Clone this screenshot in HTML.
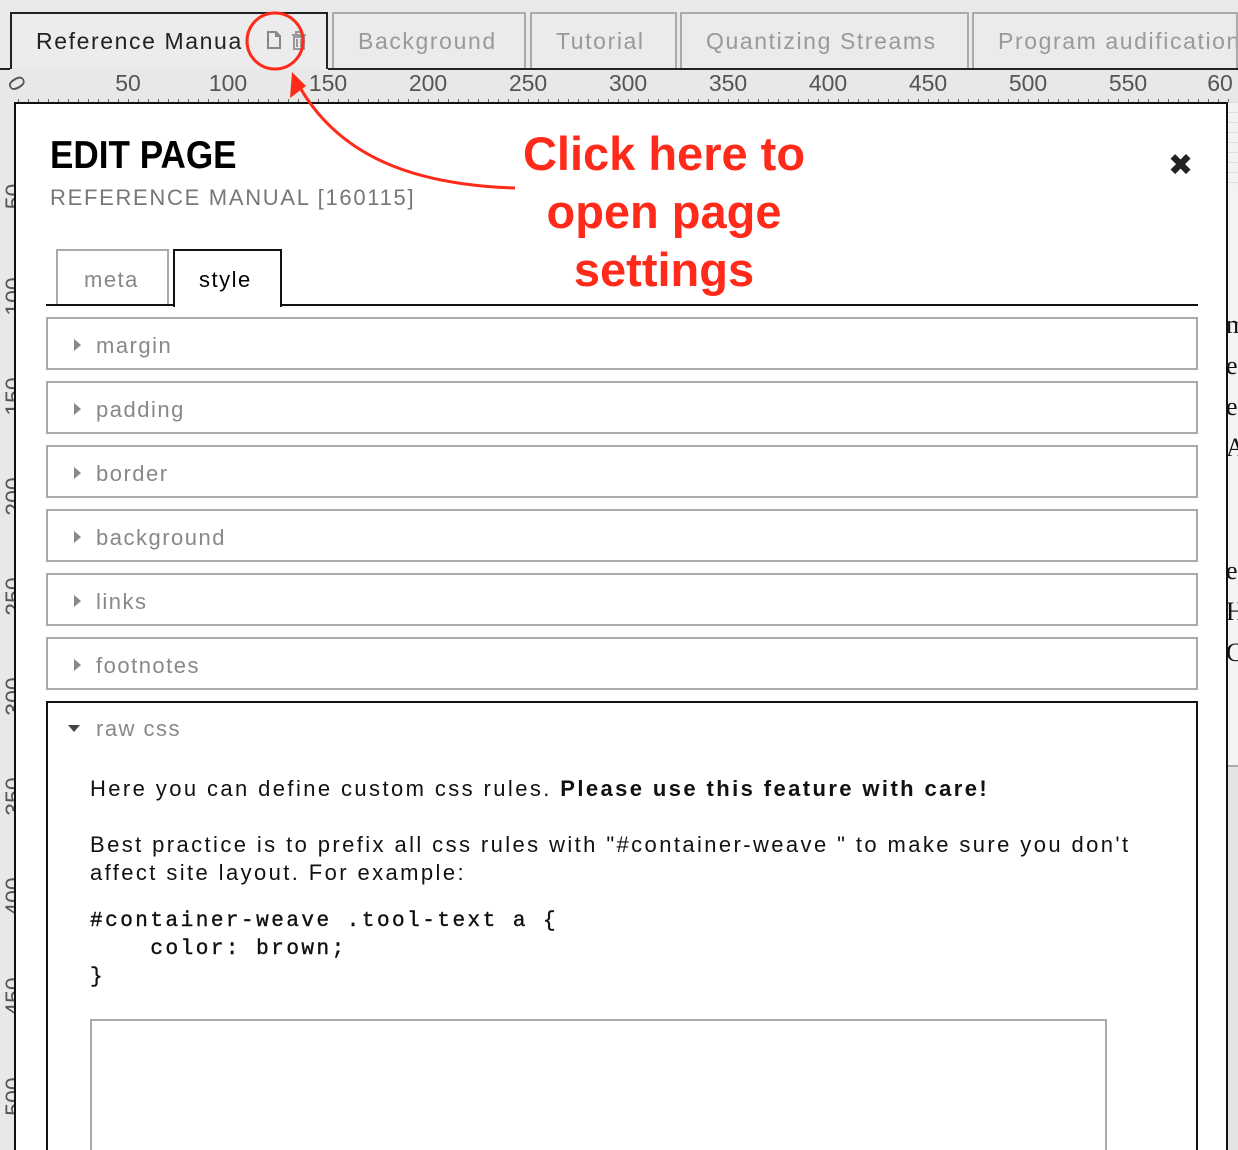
<!DOCTYPE html>
<html><head><meta charset="utf-8"><style>
*{margin:0;padding:0;box-sizing:border-box}
html,body{width:1238px;height:1150px;overflow:hidden}
body{background:#e9e9e9;font-family:"Liberation Sans","DejaVu Sans",sans-serif;position:relative}
.tab{position:absolute;top:12px;height:57px;border:2px solid #aaa;border-bottom:none;color:#999;font-size:23px;letter-spacing:1.6px;padding:14px 0 0 24px;background:#ebebeb;white-space:nowrap;overflow:hidden}
.abs{position:absolute}
.acc{position:absolute;left:46px;width:1152px;height:53px;border:2px solid #aaa;color:#888;font-size:22px;letter-spacing:1.5px;padding:14px 0 0 48px;background:#fff}
.acc:before{content:"";position:absolute;left:26px;top:20px;border-left:7px solid #888;border-top:6px solid transparent;border-bottom:6px solid transparent}
.rn{position:absolute;top:70px;font-size:23px;color:#555;font-family:"Liberation Sans Narrow","Liberation Sans",sans-serif;transform:translateX(-50%)}
.vn{position:absolute;left:-6px;font-size:23px;color:#555;transform:rotate(-90deg);transform-origin:center;width:40px;text-align:center}
.red{position:absolute;color:#ff2a1a;font-weight:bold;font-size:47px;text-align:center;width:400px;left:464px}
</style></head><body>
<div class="tab" style="left:10px;width:318px;border-color:#222;color:#222;background:#ececec">Reference Manua</div>
<div class="tab" style="left:332px;width:194px">Background</div>
<div class="tab" style="left:530px;width:147px">Tutorial</div>
<div class="tab" style="left:680px;width:289px">Quantizing Streams</div>
<div class="tab" style="left:972px;width:266px">Program audification</div>
<div class="abs" style="left:0;top:68px;width:10px;height:2px;background:#222"></div>
<div class="abs" style="left:328px;top:68px;width:910px;height:2px;background:#222"></div>
<svg class="abs" style="left:262px;top:28px" width="50" height="26"><path d="M6 4h8l4 4v12H6z M14 4v4h4" fill="none" stroke="#888" stroke-width="2"/><path d="M30 7h14 M34 7V4h6v3 M32 9h10v12H32z M35 11v8 M39 11v8" fill="none" stroke="#999" stroke-width="2"/></svg>
<div class="abs" style="left:0;top:70px;width:1238px;height:32px;background:#e8e8e8"></div>
<div class="rn" style="left:10px;transform:rotate(60deg)">0</div>
<div class="rn" style="left:128px">50</div><div class="rn" style="left:228px">100</div><div class="rn" style="left:328px">150</div><div class="rn" style="left:428px">200</div><div class="rn" style="left:528px">250</div><div class="rn" style="left:628px">300</div><div class="rn" style="left:728px">350</div><div class="rn" style="left:828px">400</div><div class="rn" style="left:928px">450</div><div class="rn" style="left:1028px">500</div><div class="rn" style="left:1128px">550</div><div class="rn" style="left:1220px">60</div>
<div class="abs" style="left:18px;top:99px;width:1220px;height:3px;background:repeating-linear-gradient(90deg,#666 0 1px,transparent 1px 10px)"></div>
<div class="abs" style="left:0;top:102px;width:14px;height:1048px;background:#e8e8e8"></div>
<div class="vn" style="top:183px">50</div><div class="vn" style="top:283px">100</div><div class="vn" style="top:383px">150</div><div class="vn" style="top:483px">200</div><div class="vn" style="top:583px">250</div><div class="vn" style="top:683px">300</div><div class="vn" style="top:783px">350</div><div class="vn" style="top:883px">400</div><div class="vn" style="top:983px">450</div><div class="vn" style="top:1083px">500</div>
<div class="abs" style="left:1228px;top:102px;width:10px;height:90px;background:repeating-linear-gradient(#ddd 0 1px,#f2f2f2 1px 10px)"></div>
<div class="abs" style="left:1228px;top:192px;width:10px;height:573px;background:#f4f4f4;font-family:'Liberation Serif',serif;font-size:26px;overflow:hidden;color:#111"><div style="position:absolute;left:-2px;top:112px;line-height:41px">m<br>ec<br>e<br>A<br><br><br>ea<br>H<br>C</div></div>
<div class="abs" style="left:1228px;top:765px;width:10px;height:385px;background:#e4e4e4;border-top:2px solid #aaa"></div>
<div class="abs" style="left:14px;top:102px;width:1214px;height:1048px;background:#fff;border:2px solid #111;border-bottom:none"></div>
<div class="abs" style="left:50px;top:134px;font-size:39px;font-weight:bold;font-family:'Liberation Sans Narrow','Liberation Sans',sans-serif;transform:scaleX(0.9);transform-origin:left">EDIT PAGE</div>
<div class="abs" style="left:50px;top:185px;font-size:22px;color:#777;letter-spacing:1.7px">REFERENCE MANUAL [160115]</div>
<div class="abs" style="left:1168px;top:148px;font-size:30px;font-weight:bold;color:#222">✖</div>
<div class="abs" style="left:56px;top:249px;width:113px;height:57px;border:2px solid #aaa;border-bottom:none;color:#888;font-size:22px;letter-spacing:1.5px;padding:16px 0 0 26px">meta</div>
<div class="abs" style="left:46px;top:304px;width:1152px;height:2px;background:#111"></div>
<div class="abs" style="left:173px;top:249px;width:109px;height:58px;border:2px solid #111;border-bottom:none;background:#fff;font-size:22px;letter-spacing:1.5px;padding:16px 0 0 24px">style</div>
<div class="acc" style="top:317px">margin</div>
<div class="acc" style="top:381px">padding</div>
<div class="acc" style="top:445px">border</div>
<div class="acc" style="top:509px">background</div>
<div class="acc" style="top:573px">links</div>
<div class="acc" style="top:637px">footnotes</div>
<div class="abs" style="left:46px;top:701px;width:1152px;height:449px;border:2px solid #111;border-bottom:none"></div>
<div class="abs" style="left:68px;top:725px;border-top:7px solid #444;border-left:6px solid transparent;border-right:6px solid transparent"></div>
<div class="abs" style="left:96px;top:716px;font-size:22px;color:#888;letter-spacing:1.5px">raw css</div>
<div class="abs" style="left:90px;top:775px;font-size:22px;letter-spacing:2.4px;line-height:28px;color:#111;width:1050px">Here you can define custom css rules. <b>Please use this feature with care!</b><br><br>Best practice is to prefix all css rules with "#container-weave " to make sure you don't affect site layout. For example:</div>
<pre class="abs" style="left:90px;top:908px;font-family:'Liberation Mono',monospace;font-size:21px;letter-spacing:2.5px;line-height:28px;color:#111;-webkit-text-stroke:0.4px #111">#container-weave .tool-text a {
    color: brown;
}</pre>
<div class="abs" style="left:90px;top:1019px;width:1017px;height:131px;border:2px solid #aaa;border-bottom:none"></div>
<svg class="abs" style="left:0;top:0" width="1238" height="300">
<circle cx="275" cy="41" r="28" fill="none" stroke="#ff2a1a" stroke-width="3"/>
<path d="M515 188 C420 185 340 160 298 84" fill="none" stroke="#ff2a1a" stroke-width="3"/>
<path d="M292 72 L290 98 L306 86 Z" fill="#ff2a1a"/>
</svg>
<div class="red" style="top:126px">Click here to</div>
<div class="red" style="top:184px">open page</div>
<div class="red" style="top:242px">settings</div>
</body></html>
